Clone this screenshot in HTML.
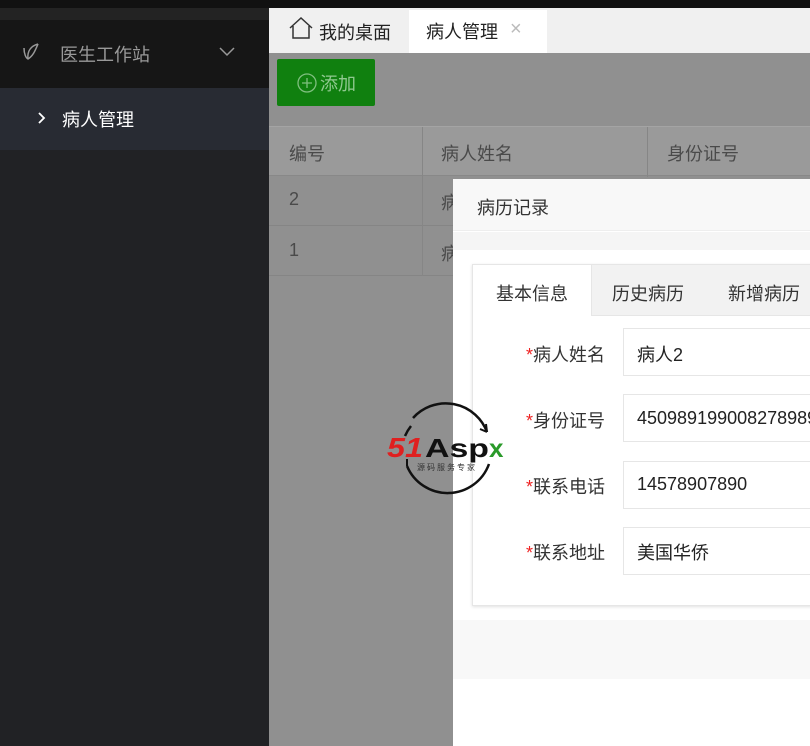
<!DOCTYPE html>
<html><head><meta charset="utf-8"><style>
*{margin:0;padding:0;box-sizing:border-box}
body{width:810px;height:746px;overflow:hidden;position:relative;background:#909090;font-family:"Liberation Sans","Noto Sans CJK SC",sans-serif;font-size:18px}
.abs{position:absolute}
</style></head><body>
<div class="abs" style="left:0;top:0;width:810px;height:8px;background:#111"></div>
<div class="abs" style="left:0;top:8px;width:269px;height:738px;background:#212225"></div>
<div class="abs" style="left:0;top:8px;width:269px;height:12px;background:#232323"></div>
<div class="abs" style="left:0;top:20px;width:269px;height:68px;background:#161616"></div>
<svg class="abs" style="left:22px;top:42px" width="18" height="20" viewBox="0 0 18 20"><path d="M16 2 C9 4 5 9 6 17 M2 6 C2 12 4 16 6 17 C11 14 13 9 16 2" fill="none" stroke="#999" stroke-width="1.5"/></svg>
<div class="abs" style="left:60px;top:41px;color:#999;font-size:18px">医生工作站</div>
<svg class="abs" style="left:219px;top:47px" width="16" height="10"><path d="M1 1 L8 8 L15 1" fill="none" stroke="#999" stroke-width="1.5"/></svg>
<div class="abs" style="left:0;top:88px;width:269px;height:62px;background:#282b33"></div>
<svg class="abs" style="left:37px;top:111px" width="10" height="14"><path d="M2 2 L7 7 L2 12" fill="none" stroke="#fff" stroke-width="1.8"/></svg>
<div class="abs" style="left:62px;top:106px;color:#fff;font-size:18px">病人管理</div>

<div class="abs" style="left:269px;top:8px;width:541px;height:45px;background:#f0f0f0"></div>
<svg class="abs" style="left:288px;top:16px" width="26" height="24" viewBox="0 0 26 24"><path d="M2 12 L13 2 L24 12 M5 10 V22 H21 V10" fill="none" stroke="#333" stroke-width="1.5"/></svg>
<div class="abs" style="left:319px;top:19px;color:#222">我的桌面</div>
<div class="abs" style="left:409px;top:10px;width:138px;height:43px;background:#fff"></div>
<div class="abs" style="left:426px;top:18px;color:#222">病人管理</div>
<div class="abs" style="left:510px;top:18px;color:#bbb;font-size:20px">×</div>

<div class="abs" style="left:277px;top:59px;width:98px;height:47px;background:#10800f;border-radius:2px"></div>
<svg class="abs" style="left:296px;top:72px" width="22" height="22"><circle cx="11" cy="11" r="9" fill="none" stroke="#7fbf7f" stroke-width="1.3"/><path d="M11 6V16M6 11H16" stroke="#7fbf7f" stroke-width="1.3"/></svg>
<div class="abs" style="left:320px;top:70px;color:#8fc88f">添加</div>

<div class="abs" style="left:269px;top:126px;width:541px;height:50px;background:#9a9a9a;border-top:1px solid #a4a4a4;border-bottom:1px solid #888"></div>
<div class="abs" style="left:269px;top:176px;width:541px;height:50px;border-bottom:1px solid #858585"></div>
<div class="abs" style="left:269px;top:226px;width:541px;height:50px;border-bottom:1px solid #858585"></div>
<div class="abs" style="left:422px;top:127px;width:1px;height:149px;background:#868686"></div>
<div class="abs" style="left:647px;top:127px;width:1px;height:50px;background:#868686"></div>
<div class="abs" style="left:289px;top:140px;color:#4a4a4a">编号</div>
<div class="abs" style="left:441px;top:140px;color:#4a4a4a">病人姓名</div>
<div class="abs" style="left:667px;top:140px;color:#4a4a4a">身份证号</div>
<div class="abs" style="left:289px;top:189px;color:#4a4a4a">2</div>
<div class="abs" style="left:441px;top:189px;color:#4a4a4a">病</div>
<div class="abs" style="left:289px;top:240px;color:#4a4a4a">1</div>
<div class="abs" style="left:441px;top:240px;color:#4a4a4a">病</div>

<div class="abs" style="left:453px;top:179px;width:357px;height:567px;background:#fff"></div>
<div class="abs" style="left:453px;top:179px;width:357px;height:52px;background:#f8f8f8;border-bottom:1px solid #eee"></div>
<div class="abs" style="left:477px;top:194px;color:#333">病历记录</div>
<div class="abs" style="left:453px;top:232px;width:357px;height:388px;background:#f5f5f5"></div>
<div class="abs" style="left:453px;top:250px;width:357px;height:370px;background:#fff"></div>
<div class="abs" style="left:472px;top:264px;width:340px;height:342px;background:#fff;border:1px solid #e6e6e6;box-shadow:0 1px 3px rgba(0,0,0,.12)"></div>
<div class="abs" style="left:591px;top:265px;width:219px;height:51px;background:#f2f2f2;border-bottom:1px solid #e6e6e6;border-left:1px solid #e6e6e6"></div>
<div class="abs" style="left:496px;top:280px;color:#333">基本信息</div>
<div class="abs" style="left:612px;top:280px;color:#333">历史病历</div>
<div class="abs" style="left:728px;top:280px;color:#333">新增病历</div>

<div class="abs" style="left:526px;top:341px;color:#333"><span style="color:#e22">*</span>病人姓名</div>
<div class="abs" style="left:526px;top:407px;color:#333"><span style="color:#e22">*</span>身份证号</div>
<div class="abs" style="left:526px;top:473px;color:#333"><span style="color:#e22">*</span>联系电话</div>
<div class="abs" style="left:526px;top:539px;color:#333"><span style="color:#e22">*</span>联系地址</div>
<div class="abs" style="left:623px;top:328px;width:200px;height:48px;border:1px solid #e6e6e6"></div>
<div class="abs" style="left:623px;top:394px;width:200px;height:48px;border:1px solid #e6e6e6"></div>
<div class="abs" style="left:623px;top:461px;width:200px;height:48px;border:1px solid #e6e6e6"></div>
<div class="abs" style="left:623px;top:527px;width:200px;height:48px;border:1px solid #e6e6e6"></div>
<div class="abs" style="left:637px;top:341px;color:#222">病人2</div>
<div class="abs" style="left:637px;top:408px;color:#222;white-space:nowrap">450989199008278989</div>
<div class="abs" style="left:637px;top:474px;color:#222">14578907890</div>
<div class="abs" style="left:637px;top:539px;color:#222">美国华侨</div>
<div class="abs" style="left:453px;top:620px;width:357px;height:59px;background:#f8f8f8"></div>

<svg class="abs" style="left:385px;top:400px" width="130" height="96" viewBox="0 0 130 96">
<path d="M28 18 A44 44 0 0 1 102 32" fill="none" stroke="#111" stroke-width="2.5"/>
<path d="M102 32 l-1 -8 M102 32 l-7 -3" stroke="#111" stroke-width="2"/>
<path d="M22 66 A44 44 0 0 0 104 64" fill="none" stroke="#111" stroke-width="2.5"/>
<path d="M22 66 l0 -7" stroke="#111" stroke-width="2"/>
<path d="M26 26 A44 44 0 0 0 20 36" fill="none" stroke="#111" stroke-width="2.5"/>
<text x="2" y="57" font-family="Liberation Sans" font-weight="bold" font-style="italic" font-size="28" fill="#e02020" textLength="36" lengthAdjust="spacingAndGlyphs">51</text>
<text x="40" y="57" font-family="Liberation Sans" font-weight="bold" font-size="26" fill="#111" textLength="64" lengthAdjust="spacingAndGlyphs">Asp</text>
<text x="104" y="57" font-family="Liberation Sans" font-weight="bold" font-size="26" fill="#2a9a2a">x</text>
<text x="32" y="70" font-family="Noto Sans CJK SC" font-size="8" fill="#333" letter-spacing="2">源码服务专家</text>
</svg>
</body></html>
